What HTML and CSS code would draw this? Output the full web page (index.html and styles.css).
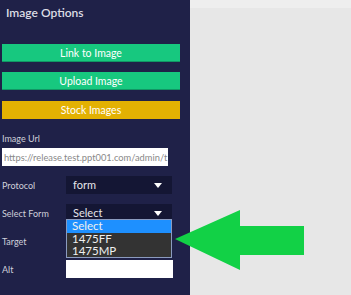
FILE: index.html
```html
<!doctype html>
<html lang="en">
    <head>
        <meta charset="UTF-8" />
        <title>Image Options</title>
        <link rel="stylesheet" href="styles.css">
    </head>
    <body>
        <div class="sidebar">
            <h2 class="title">Image Options</h2>

            <button class="btn btn-green first">Link to Image</button>
            <button class="btn btn-green">Upload Image</button>
            <button class="btn btn-yellow">Stock Images</button>

            <label class="url-label">Image Url</label>
            <input class="url-input" type="text" placeholder="https://release.test.ppt001.com/admin/t" />

            <div class="row">
                <span class="row-label">Protocol</span>
                <div class="fake-select">form<span class="caret"></span></div>
            </div>
            <div class="row">
                <span class="row-label">Select Form</span>
                <div class="fake-select open">Select<span class="caret"></span>
                    <ul class="dropdown">
                        <li class="active">Select</li>
                        <li>1475FF</li>
                        <li>1475MP</li>
                    </ul>
                </div>
            </div>
            <div class="row">
                <span class="row-label">Target</span>
                <div class="fake-select"></div>
            </div>
            <div class="row">
                <span class="row-label">Alt</span>
                <div class="white-box"></div>
            </div>
        </div>

        <div class="main">
            <div class="topbar"></div>
            <!-- pointer arrow -->
            <svg class="arrow" width="130" height="62" viewBox="0 0 130 62">
                <polygon points="0,29 65,0 65,16 129,16 129,45 65,45 65,60" fill="#12d146" />
            </svg>
        </div>
    </body>
</html>
```

FILE: styles.css
```css
body {
    margin: 0;
    font-family: Lato, "Open Sans", sans-serif;
    display: flex;
    height: 295px;
    overflow: hidden;
    background-color: #e7e7e7;
}
.sidebar {
    width: 190px;
    flex-shrink: 0;
    background-color: #1f2148;
    color: #d8d9e2;
    padding-top: 5px;
    box-sizing: border-box;
}
.title {
    font-size: 12px;
    font-weight: 600;
    margin: 0 0 0 6px;
    color: #dcdde4;
}
.btn {
    display: block;
    width: 178px;
    height: 18px;
    margin: 10px 0 0 2px;
    border: none;
    color: #fff;
    font-family: inherit;
    font-size: 10.5px;
    padding: 0;
}
.btn.first {
    margin-top: 24px;
}
.btn-green {
    background-color: #17c87f;
    border-bottom: 1px solid #119765;
}
.btn-yellow {
    background-color: #e3b102;
    margin-top: 11px;
}
.url-label {
    display: block;
    font-size: 9px;
    margin: 14px 0 0 2px;
    color: #cfd0da;
}
.url-input {
    display: block;
    width: 166px;
    height: 18px;
    margin: 4px 0 0 2px;
    border: none;
    padding: 0 0 0 2px;
    box-sizing: border-box;
    font-family: inherit;
    font-size: 9.3px;
}
.url-input::placeholder {
    color: #888;
}
.row {
    display: flex;
    align-items: center;
    height: 18px;
    margin-top: 10px;
}
.row-label {
    width: 64px;
    padding-left: 2px;
    font-size: 9px;
    color: #cfd0da;
}
.fake-select {
    position: relative;
    width: 106px;
    height: 18px;
    background-color: #141634;
    color: #e5e5ea;
    font-size: 11px;
    line-height: 18px;
    padding-left: 7px;
    box-sizing: border-box;
}
.caret {
    position: absolute;
    right: 10px;
    top: 7px;
    border-left: 4px solid transparent;
    border-right: 4px solid transparent;
    border-top: 5px solid #fff;
}
.dropdown {
    position: absolute;
    left: 0;
    top: 15px;
    width: 106px;
    margin: 0;
    padding: 0;
    list-style: none;
    background-color: #333;
    border: 1px solid #8b9bbf;
    box-sizing: border-box;
    z-index: 2;
}
.dropdown li {
    height: 12px;
    line-height: 12px;
    padding-left: 5px;
    font-size: 11.5px;
    color: #f0f0f0;
}
.dropdown li.active {
    background-color: #1e90ff;
    height: 13px;
}
.white-box {
    width: 107px;
    height: 18px;
    background-color: #fff;
}
.main {
    flex: 1;
    position: relative;
}
.topbar {
    height: 8px;
    background-color: #eeeeee;
}
.arrow {
    position: absolute;
    left: -15px;
    top: 210px;
}
```
